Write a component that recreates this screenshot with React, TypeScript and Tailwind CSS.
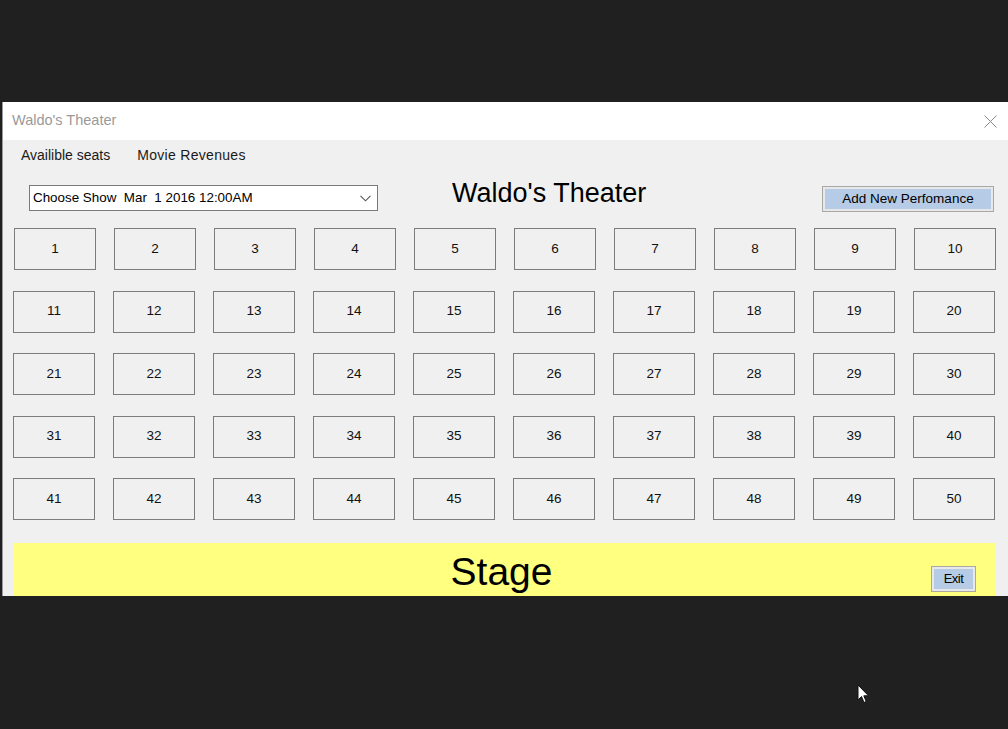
import React from "react";

const seatRows = [0, 1, 2, 3, 4].map((r) =>
  Array.from({ length: 10 }, (_, c) => r * 10 + c + 1)
);

const App: React.FC = () => {
  return (
    <div
      className="relative w-[1008px] h-[729px] bg-[#202020] overflow-hidden pt-[102px] pl-[2px]"
      style={{ fontFamily: '"Liberation Sans", Arial, sans-serif' }}
    >
      {/* Window */}
      <div className="w-[1006px] h-[494px] flex flex-col overflow-hidden border-l border-[#9a9a9a] bg-[#f0f0f0]">
        {/* Title bar */}
        <div className="h-[38px] shrink-0 bg-white flex items-center justify-between pl-[9px] pr-[12px]">
          <span className="text-[14.5px] text-[#9a9a9a]">Waldo's Theater</span>
          <svg width="13" height="13" viewBox="0 0 13 13" className="mr-[-1px]">
            <path d="M0.5 0.5 L12.5 12.5 M12.5 0.5 L0.5 12.5" stroke="#8a8a8a" strokeWidth="1" />
          </svg>
        </div>

        {/* Menu */}
        <div className="h-[30px] shrink-0 flex items-center gap-[27px] pl-[18px] text-[14px] text-[#1a1a1a]">
          <span>Availible seats</span>
          <span className="tracking-[0.3px]">Movie Revenues</span>
        </div>

        {/* Toolbar */}
        <div className="mt-[15px] h-[26px] shrink-0 flex items-center pl-[26px]">
          <div className="w-[349px] h-[26px] bg-white border border-[#7a7a7a] flex items-center justify-between pl-[3px] pr-[6px]">
            <span className="text-[13.4px] text-black whitespace-pre">Choose Show  Mar  1 2016 12:00AM</span>
            <svg width="11" height="7" viewBox="0 0 11 7">
              <path d="M0.5 0.8 L5.5 5.8 L10.5 0.8" fill="none" stroke="#555" strokeWidth="1.1" />
            </svg>
          </div>
          <div className="ml-[74px] w-[200px] text-[27px] text-black leading-none mt-[-9px] whitespace-nowrap">
            Waldo's Theater
          </div>
          <div className="ml-[170px] mt-[2px] w-[172px] h-[26px] border border-[#a8a8a8] bg-[#e8e8e8] p-[2px]">
            <div className="w-full h-full bg-[#b6cbe6] flex items-center justify-center text-[13.5px] text-black">
              Add New Perfomance
            </div>
          </div>
        </div>

        {/* Seats */}
        <div className="mt-[17px] pl-[10px] flex flex-col gap-[20.5px] shrink-0">
          {seatRows.map((row, ri) => (
            <div key={ri} className={`flex gap-[18px] ${ri === 0 ? "ml-[1px]" : ""}`}>
              {row.map((n) => (
                <div
                  key={n}
                  className="w-[82px] h-[42px] border border-[#7c7c7c] bg-[#f0f0f0] flex items-center justify-center text-[13.5px] text-[#111]"
                >
                  {n}
                </div>
              ))}
            </div>
          ))}
        </div>

        {/* Stage */}
        <div className="relative mt-[23px] ml-[11px] w-[981px] h-[70px] shrink-0 bg-[#ffff80] flex justify-center">
          <span className="text-[39px] text-black leading-none mt-[9px] ml-[-6px]">Stage</span>
          <div className="absolute left-[917px] top-[23px] w-[45px] h-[26px] border border-[#a8a8a8] bg-[#e8e8e8] p-[2px]">
            <div className="w-full h-full bg-[#b6cbe6] flex items-center justify-center text-[13px] text-black tracking-[-0.5px]">
              Exit
            </div>
          </div>
        </div>
      </div>

      {/* Mouse cursor */}
      <svg className="absolute left-[857px] top-[684px]" width="13" height="20" viewBox="0 0 13 20">
        <path d="M1 1 L1 16 L4.5 12.5 L7 18.5 L9.2 17.5 L6.8 11.8 L11.5 11.8 Z" fill="#ffffff" stroke="#111" strokeWidth="1" />
      </svg>
    </div>
  );
};

export default App;
